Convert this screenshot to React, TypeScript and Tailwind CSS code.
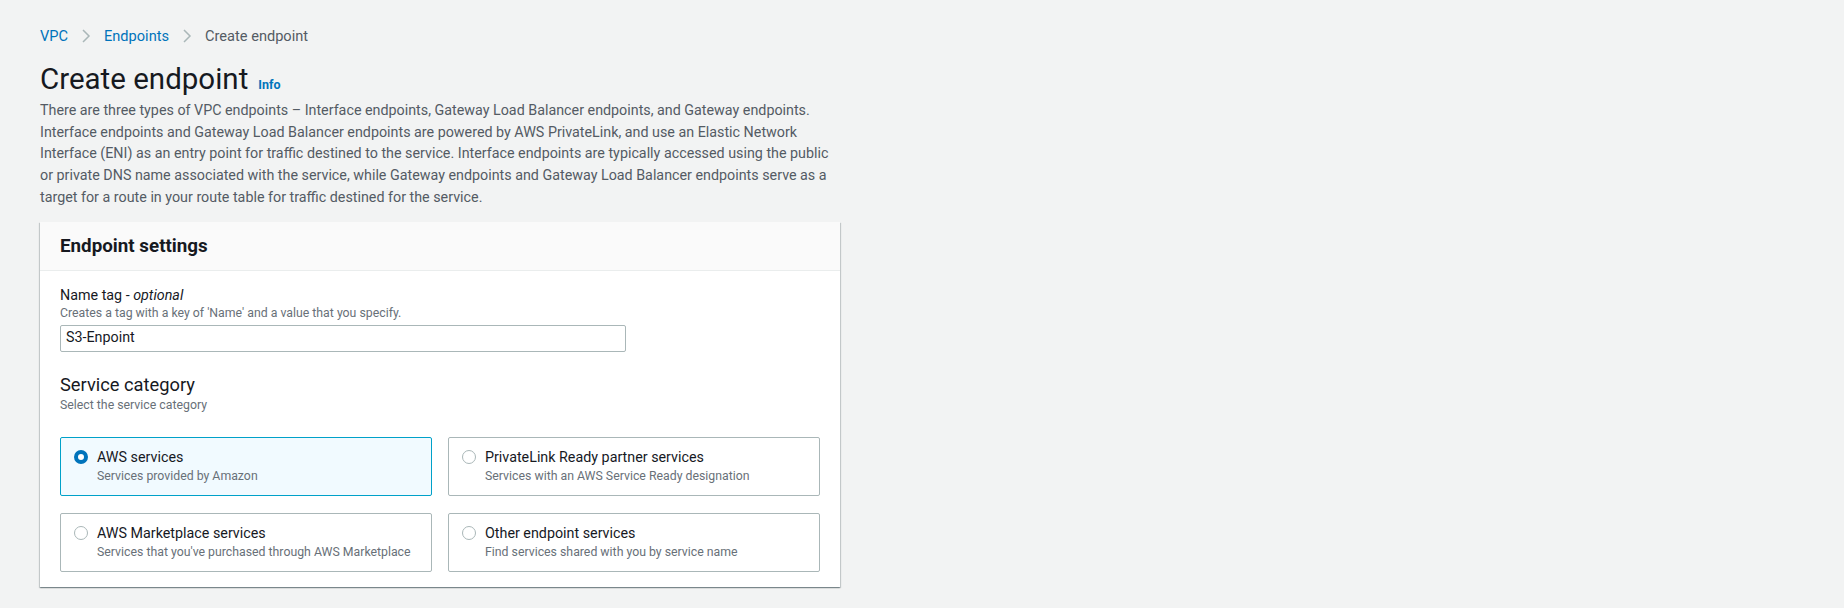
import React from 'react'

const FONT = { fontFamily: 'Roboto, "Open Sans", Arial, sans-serif' }

const OPTIONS = [
  { title: 'AWS services', hint: 'Services provided by Amazon', selected: true },
  { title: 'PrivateLink Ready partner services', hint: 'Services with an AWS Service Ready designation', selected: false },
  { title: 'AWS Marketplace services', hint: "Services that you've purchased through AWS Marketplace", selected: false },
  { title: 'Other endpoint services', hint: 'Find services shared with you by service name', selected: false },
]

const DESCRIPTION = [
  'There are three types of VPC endpoints – Interface endpoints, Gateway Load Balancer endpoints, and Gateway endpoints.',
  'Interface endpoints and Gateway Load Balancer endpoints are powered by AWS PrivateLink, and use an Elastic Network',
  'Interface (ENI) as an entry point for traffic destined to the service. Interface endpoints are typically accessed using the public',
  'or private DNS name associated with the service, while Gateway endpoints and Gateway Load Balancer endpoints serve as a',
  'target for a route in your route table for traffic destined for the service.',
]

export default function App() {
  return (
    <div className="min-h-[608px] w-full bg-[#f2f3f3] pl-[40px] pt-[26px] text-[#16191f]" style={FONT}>
      <nav className="flex h-[20px] items-center text-[14.6px] leading-[20px]">
        <a className="text-[#0073bb]">VPC</a>
        <Chevron />
        <a className="text-[#0073bb]">Endpoints</a>
        <Chevron />
        <span className="text-[#545b64]">Create endpoint</span>
      </nav>

      <div className="mt-[15px] flex items-baseline gap-[10px]">
        <h1 className="text-[29.5px] leading-[36px] font-normal text-[#16191f]">Create endpoint</h1>
        <a className="text-[12.5px] font-bold text-[#0073bb]">Info</a>
      </div>

      <div className="mt-[3px] text-[14.3px] leading-[21.7px] text-[#545b64]">
        {DESCRIPTION.map(line => (
          <div key={line} className="whitespace-nowrap">{line}</div>
        ))}
      </div>

      <section className="mt-[13px] w-[800px] bg-white shadow-[0_1px_1px_0_rgba(0,28,36,0.3),1px_1px_1px_0_rgba(0,28,36,0.15),-1px_1px_1px_0_rgba(0,28,36,0.15)]">
        <header className="flex h-[49px] items-center border-b border-[#eaeded] bg-[#fafafa] px-[20px]">
          <h2 className="text-[18.8px] font-bold leading-[24px]">Endpoint settings</h2>
        </header>

        <div className="px-[20px] pt-[14px] pb-[15px]">
          <div className="text-[14.3px] leading-[20px]">
            Name tag - <i>optional</i>
          </div>
          <div className="text-[12.3px] leading-[16px] text-[#687078]">
            Creates a tag with a key of 'Name' and a value that you specify.
          </div>
          <div className="mt-[4px] flex h-[27px] w-[566px] items-center rounded-[2px] border border-[#aab7b8] bg-white px-[5px] text-[14.3px]">
            S3-Enpoint
          </div>

          <h3 className="mt-[21px] text-[18.3px] leading-[24px] font-normal">Service category</h3>
          <div className="text-[12.3px] leading-[16px] text-[#687078]">Select the service category</div>

          <div className="mt-[24px] grid grid-cols-2 gap-x-[16px] gap-y-[17px]">
            {OPTIONS.map(option => (
              <Tile key={option.title} {...option} />
            ))}
          </div>
        </div>
      </section>
    </div>
  )
}

function Chevron() {
  return (
    <svg width="24" height="14" viewBox="0 0 24 14" className="mx-[6px]" aria-hidden>
      <polyline points="9,1 15,7 9,13" fill="none" stroke="#aab7b8" strokeWidth="1.5" />
    </svg>
  )
}

function Tile({ title, hint, selected }: { title: string; hint: string; selected: boolean }) {
  return (
    <div
      className={`flex h-[59px] gap-[9px] rounded-[2px] border pl-[13px] pt-[9px] ${selected ? 'border-[#00a1c9] bg-[#f1faff]' : 'border-[#aab7b8] bg-white'}`}
    >
      <span className="flex h-[20px] items-center">
        {selected ? (
          <span className="h-[14px] w-[14px] rounded-full border-[4px] border-[#0073bb] bg-white" />
        ) : (
          <span className="h-[14px] w-[14px] rounded-full border-[1.5px] border-[#aab7b8] bg-white" />
        )}
      </span>
      <div>
        <div className="text-[14.3px] leading-[20px] text-[#16191f]">{title}</div>
        <div className="mt-[1px] text-[12.3px] leading-[16px] text-[#687078]">{hint}</div>
      </div>
    </div>
  )
}
